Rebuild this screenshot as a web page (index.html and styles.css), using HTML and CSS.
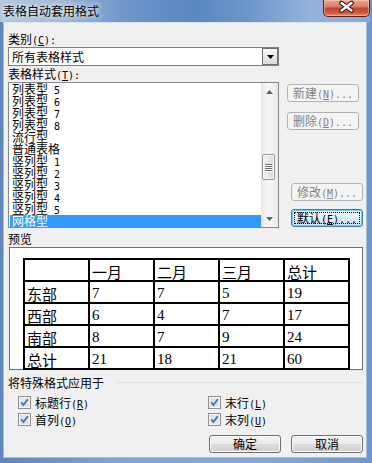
FILE: index.html
```html
<!DOCTYPE html>
<html lang="zh-CN">
<head>
  <meta charset="UTF-8">
  <meta name="viewport" content="width=device-width, initial-scale=1.0">
  <title>表格自动套用格式</title>
  <link rel="stylesheet" href="styles.css">
</head>
<body>

<div class="window">
  <div class="titlebar">
    <span class="title">表格自动套用格式</span>
    <div class="close">
      <svg width="45" height="16" viewBox="0 0 45 16">
        <path d="M17.5 3 L27.5 10.5 M27.5 3 L17.5 10.5" stroke="#3b1410" stroke-width="4.6" stroke-linecap="round"/>
        <path d="M17.5 3 L27.5 10.5 M27.5 3 L17.5 10.5" stroke="#fff" stroke-width="2.4" stroke-linecap="round"/>
      </svg>
    </div>
  </div>

  <div class="client">
    <div class="label">类别<span class="hw">(<u>C</u>):</span></div>
    <div class="combo">
      <span class="combo-text">所有表格样式</span>
      <span class="combo-btn">
        <svg width="7" height="4" viewBox="0 0 7 4"><polygon points="0,0 7,0 3.5,4" fill="#000"/></svg>
      </span>
    </div>

    <div class="label">表格样式<span class="hw">(<u>T</u>):</span></div>
    <div class="styles-row">
      <div class="listbox">
        <ul class="items">
          <li>列表型<span class="hw"> 5</span></li>
          <li>列表型<span class="hw"> 6</span></li>
          <li>列表型<span class="hw"> 7</span></li>
          <li>列表型<span class="hw"> 8</span></li>
          <li>流行型</li>
          <li>普通表格</li>
          <li>竖列型<span class="hw"> 1</span></li>
          <li>竖列型<span class="hw"> 2</span></li>
          <li>竖列型<span class="hw"> 3</span></li>
          <li>竖列型<span class="hw"> 4</span></li>
          <li>竖列型<span class="hw"> 5</span></li>
          <li class="sel">网格型</li>
        </ul>
        <div class="vscroll">
          <div class="arrow">
            <svg width="7" height="4" viewBox="0 0 7 4"><polygon points="0,4 7,4 3.5,0" fill="#606060"/></svg>
          </div>
          <div class="track">
            <div class="thumb"><i></i><i></i><i></i><i></i></div>
          </div>
          <div class="arrow">
            <svg width="7" height="4" viewBox="0 0 7 4"><polygon points="0,0 7,0 3.5,4" fill="#606060"/></svg>
          </div>
        </div>
      </div>

      <div class="side">
        <button class="btn off">新建<span class="hw">(<u>N</u>)...</span></button>
        <button class="btn off gap-a">删除<span class="hw">(<u>D</u>)...</span></button>
        <button class="btn off shift gap-b">修改<span class="hw">(<u>M</u>)...</span></button>
        <button class="btn focus shift gap-c"><span class="ring">默认<span class="hw">(<u>E</u>)...</span></span></button>
      </div>
    </div>

    <div class="label gap-label">预览</div>
    <div class="preview">
      <table class="sample">
        <tr><td></td><td>一月</td><td>二月</td><td>三月</td><td>总计</td></tr>
        <tr><td>东部</td><td class="num">7</td><td class="num">7</td><td class="num">5</td><td class="num">19</td></tr>
        <tr><td>西部</td><td class="num">6</td><td class="num">4</td><td class="num">7</td><td class="num">17</td></tr>
        <tr><td>南部</td><td class="num">8</td><td class="num">7</td><td class="num">9</td><td class="num">24</td></tr>
        <tr><td>总计</td><td class="num">21</td><td class="num">18</td><td class="num">21</td><td class="num">60</td></tr>
      </table>
    </div>

    <div class="group">
      <span>将特殊格式应用于</span>
      <i class="group-line"></i>
    </div>

    <div class="checks">
      <label class="check">
        <svg width="13" height="13" viewBox="0 0 13 13"><rect x="0.5" y="0.5" width="12" height="12" fill="#f6f6f6" stroke="#8f8f8f"/><rect x="2" y="2" width="9" height="9" fill="#dfe3ea"/><path d="M3.2 6.3 L5.4 9 L9.8 3.2" fill="none" stroke="#4a70ad" stroke-width="1.8"/></svg>
        <span>标题行<span class="hw">(<u>R</u>)</span></span>
      </label>
      <label class="check">
        <svg width="13" height="13" viewBox="0 0 13 13"><rect x="0.5" y="0.5" width="12" height="12" fill="#f6f6f6" stroke="#8f8f8f"/><rect x="2" y="2" width="9" height="9" fill="#dfe3ea"/><path d="M3.2 6.3 L5.4 9 L9.8 3.2" fill="none" stroke="#4a70ad" stroke-width="1.8"/></svg>
        <span>末行<span class="hw">(<u>L</u>)</span></span>
      </label>
      <label class="check">
        <svg width="13" height="13" viewBox="0 0 13 13"><rect x="0.5" y="0.5" width="12" height="12" fill="#f6f6f6" stroke="#8f8f8f"/><rect x="2" y="2" width="9" height="9" fill="#dfe3ea"/><path d="M3.2 6.3 L5.4 9 L9.8 3.2" fill="none" stroke="#4a70ad" stroke-width="1.8"/></svg>
        <span>首列<span class="hw">(<u>O</u>)</span></span>
      </label>
      <label class="check">
        <svg width="13" height="13" viewBox="0 0 13 13"><rect x="0.5" y="0.5" width="12" height="12" fill="#f6f6f6" stroke="#8f8f8f"/><rect x="2" y="2" width="9" height="9" fill="#dfe3ea"/><path d="M3.2 6.3 L5.4 9 L9.8 3.2" fill="none" stroke="#4a70ad" stroke-width="1.8"/></svg>
        <span>末列<span class="hw">(<u>U</u>)</span></span>
      </label>
    </div>

    <div class="actions">
      <button class="btn">确定</button>
      <button class="btn">取消</button>
    </div>
  </div>
</div>

</body>
</html>
```

FILE: styles.css
```css
body {
  margin: 0;
  font-family: "Noto Sans CJK SC", sans-serif;
  font-size: 12px;
  color: #000;
}

.hw {
  font-family: "DejaVu Sans Mono", monospace;
  font-size: 10px;
}

.window {
  width: 372px;
  height: 463px;
  box-sizing: border-box;
  padding: 0 5px 5px 3px;
  display: flex;
  flex-direction: column;
  background: linear-gradient(to right, #5f86bb, #7fa3d1 30%, #86a8d4 70%, #7196c8);
}

.titlebar {
  height: 22px;
  display: flex;
  margin-right: -3px;
  margin-left: -3px;
  padding-left: 3px;
  background: linear-gradient(to right, #b2c6df 0%, #a4bbd9 14%, #7399cb 32%, #5b86c1 52%, #6c94c9 66%, #94b3da 84%, #8aaad4 100%);
}

.title {
  flex: 1;
  line-height: 22px;
  text-shadow: 0 0 4px #fff, 0 0 8px rgba(255, 255, 255, 0.7);
}

.close {
  width: 47px;
  height: 17px;
  box-sizing: border-box;
  border: 1px solid #5a1d14;
  border-top: none;
  border-radius: 0 0 5px 5px;
  background: linear-gradient(#e9a996 0%, #d57c66 42%, #c2432b 52%, #cf553a 78%, #e48b6c 100%);
  box-shadow: inset 0 0 0 1px rgba(255, 210, 190, 0.5);
}

.close svg {
  display: block;
}

.client {
  flex: 1;
  background: #f0f0f0;
  border: 1px solid #dce6f2;
  border-left-color: #a9bdd7;
  border-right-color: #a9bdd7;
  border-bottom-color: #a9bdd7;
  padding: 8px 3px 0 4px;
}

.label {
  height: 16px;
  line-height: 16px;
}

.gap-label {
  margin-top: 3px;
}

.combo {
  width: 271px;
  height: 19px;
  box-sizing: border-box;
  border: 1px solid #7f7f7f;
  background: #fff;
  display: flex;
  align-items: center;
}

.combo-text {
  flex: 1;
  padding-left: 3px;
  line-height: 17px;
}

.combo-btn {
  width: 16px;
  height: 17px;
  box-sizing: border-box;
  border: 1px solid #707070;
  background: linear-gradient(#f7f7f7, #dcdcdc);
  display: flex;
  align-items: center;
  justify-content: center;
}

.styles-row {
  display: flex;
  align-items: flex-start;
}

.listbox {
  width: 271px;
  height: 146px;
  box-sizing: border-box;
  border: 1px solid #828790;
  background: #fff;
  display: flex;
}

.items {
  list-style: none;
  margin: 0;
  padding: 0;
  flex: 1;
}

.items li {
  height: 12px;
  line-height: 12px;
  padding-left: 3px;
  white-space: nowrap;
}

.items li.sel {
  background: #3399ff;
  color: #fff;
  margin-left: 1px;
  padding-left: 2px;
}

.vscroll {
  width: 17px;
  display: flex;
  flex-direction: column;
  background: linear-gradient(to right, #e6e6e6, #f5f5f5 35%, #f5f5f5 65%, #e8e8e8);
}

.arrow {
  height: 17px;
  display: flex;
  align-items: center;
  justify-content: center;
}

.track {
  flex: 1;
}

.thumb {
  width: 13px;
  height: 26px;
  box-sizing: border-box;
  margin: 54px 0 0 1px;
  border: 1px solid #959595;
  border-radius: 2px;
  background: linear-gradient(to right, #f3f3f3, #e8e8e8 50%, #d6d6d6);
  box-shadow: inset 0 0 0 1px #fafafa;
  display: flex;
  flex-direction: column;
  align-items: center;
  justify-content: center;
  gap: 1px;
}

.thumb i {
  display: block;
  width: 7px;
  height: 1px;
  background: #707070;
  box-shadow: 0 1px 0 #fff;
}

.side {
  display: flex;
  flex-direction: column;
  align-items: flex-start;
  padding-top: 2px;
}

.btn {
  width: 72px;
  height: 18px;
  box-sizing: border-box;
  padding: 0;
  font-family: inherit;
  font-size: 12px;
  line-height: 16px;
  color: #000;
  text-align: center;
  border: 1px solid #707070;
  border-radius: 3px;
  background: linear-gradient(#f2f2f2 0%, #ebebeb 50%, #dddddd 50%, #cfcfcf 100%);
  box-shadow: inset 0 0 0 1px #fcfcfc;
}

.side .btn {
  margin-left: 8px;
}

.side .shift {
  margin-left: 12px;
}

.gap-a {
  margin-top: 10px;
}

.gap-b {
  margin-top: 53px;
}

.gap-c {
  margin-top: 8px;
}

.btn.off {
  border-color: #adb2b5;
  background: #f4f4f4;
  color: #838383;
  box-shadow: none;
}

.btn.focus {
  border-color: #3c7fb1;
  background: linear-gradient(#f4fafe 0%, #eaf4fb 50%, #dbecf7 50%, #cfe5f4 100%);
  box-shadow: inset 0 0 0 1px #6fcbf1;
}

.ring {
  display: block;
  margin: 2px;
  height: 12px;
  box-sizing: border-box;
  border: 1px dotted #000;
  line-height: 10px;
}

.preview {
  margin-left: 1px;
  width: 354px;
  height: 123px;
  box-sizing: border-box;
  border: 1px solid #6f6f6f;
  background: #fff;
  padding: 10px 0 0 13px;
}

.sample {
  border-collapse: collapse;
  table-layout: fixed;
  width: 327px;
}

.sample td {
  border: 2px solid #000;
  height: 16px;
  padding: 3px 0 0 2px;
  font-size: 15px;
  line-height: 17px;
  vertical-align: middle;
}

.sample td.num {
  font-family: "Liberation Serif", serif;
  font-size: 15px;
}

.group {
  display: flex;
  align-items: center;
  height: 16px;
  margin-top: 4px;
}

.group-line {
  flex: 1;
  height: 1px;
  margin-left: 13px;
  background: #d5dfe5;
}

.checks {
  display: grid;
  grid-template-columns: 190px auto;
  margin-top: 4px;
  padding-left: 10px;
}

.check {
  height: 17px;
  display: flex;
  align-items: center;
  gap: 4px;
}

.check svg {
  display: block;
}

.actions {
  display: flex;
  justify-content: flex-end;
  gap: 10px;
  margin-top: 7px;
}
```
